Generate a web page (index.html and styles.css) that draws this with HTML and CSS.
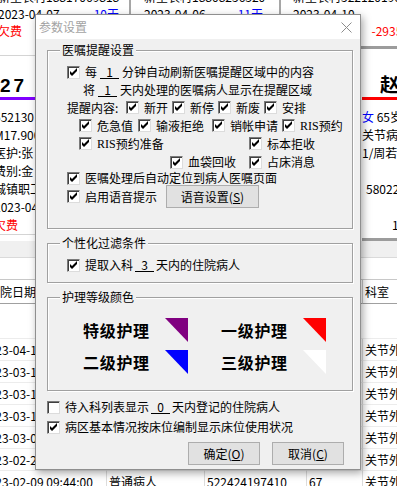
FILE: index.html
```html
<!DOCTYPE html>
<html lang="zh-CN">
<head>
<meta charset="utf-8">
<title>参数设置</title>
<link rel="stylesheet" href="styles.css">
</head>
<body>
<div class="app">
  <div class="toprow">
    <div class="tcard tc-a">
      <div class="tl"><span>新星农村</span><span>18817069818</span></div>
      <div class="tl"><span>2023-04-07</span><span class="blue">10天</span></div>
      <div class="tl"><span class="red">欠费</span></div>
    </div>
    <div class="tcard tc-b">
      <div class="tl"><span>新星农村</span><span>18808256320</span></div>
      <div class="tl"><span>2023-04-06</span><span class="blue">11天</span></div>
      <div class="tl"><span class="red">欠费</span></div>
    </div>
    <div class="tcard tc-c">
      <div class="tl"><span>新星农村</span><span>522120196506</span></div>
      <div class="tl"><span>2023-04-10</span><span class="blue">7天</span></div>
      <div class="tl"><span class="red">欠费</span><span class="red">-2935.00</span></div>
    </div>
  </div>

  <div class="midrow">
    <div class="mcard mc-a">
      <div class="mname">27</div>
      <div class="mbar bar-purple"></div>
      <div class="mlines">
        <div>552130</div>
        <div>M17.900</div>
        <div>医护:张</div>
        <div>费别:金</div>
        <div>城镇职工</div>
        <div>2023-04</div>
        <div class="red">欠费</div>
      </div>
    </div>
    <div class="mcard mc-b">
      <div class="mname">28</div>
      <div class="mbar bar-red"></div>
      <div class="mlines">
        <div>男 58岁</div>
        <div>膝关节病</div>
        <div>医护:李</div>
        <div>费别:农</div>
        <div>新农合</div>
        <div>2023-04</div>
        <div class="red">欠费</div>
      </div>
    </div>
    <div class="mcard mc-c">
      <div class="mname cname">赵</div>
      <div class="mbar bar-red"></div>
      <div class="mlines">
        <div><span class="blue">女</span> 65岁</div>
        <div>关节病</div>
        <div>1/周若</div>
        <div>&nbsp;</div>
        <div class="ind4">58022</div>
        <div>&nbsp;</div>
        <div class="ind30">15</div>
      </div>
    </div>
  </div>

  <div class="tbar"></div>
  <div class="tgap"></div>
  <div class="table">
    <div class="th th-date">入院日期</div>
    <div class="th">病人类别</div>
    <div class="th">身份证号</div>
    <div class="th">年龄</div>
    <div class="th">科室</div>
    <div class="tblank"></div>

    <div class="td">2023-04-14 10:21:00</div><div class="td">普通病人</div><div class="td">522424196805</div><div class="td">54</div><div class="td">关节外科</div>
    <div class="td">2023-03-18 08:12:00</div><div class="td">普通病人</div><div class="td">522424197203</div><div class="td">51</div><div class="td">关节外科</div>
    <div class="td">2023-03-16 15:40:00</div><div class="td">普通病人</div><div class="td">522424195911</div><div class="td">63</div><div class="td">关节外科</div>
    <div class="td">2023-03-12 11:05:00</div><div class="td">普通病人</div><div class="td">522424196307</div><div class="td">59</div><div class="td">关节外科</div>
    <div class="td">2023-03-06 09:30:00</div><div class="td">普通病人</div><div class="td">522424198102</div><div class="td">42</div><div class="td">关节外科</div>
    <div class="td">2023-02-26 16:18:00</div><div class="td">普通病人</div><div class="td">522424195608</div><div class="td">66</div><div class="td">关节外科</div>
    <div class="td">2023-02-09 09:44:00</div><div class="td">普通病人</div><div class="td">522424197410</div><div class="td">67</div><div class="td">关节外科</div>
  </div>

  <div class="dialog">
    <div class="titlebar">
      <span class="title">参数设置</span>
      <svg class="close" width="11" height="11" viewBox="0 0 11 11"><path d="M0.5 0.5 L10.5 10.5 M10.5 0.5 L0.5 10.5" stroke="#8c8c8c" stroke-width="1" fill="none"/></svg>
    </div>
    <div class="dlg-body">
      <div class="group g1">
        <div class="gtitle">医嘱提醒设置</div>
        <div class="row r1"><span class="cb"><svg width="11" height="11" viewBox="0 0 11 11"><polygon points="2,4 4,6 9,1 9,4 4,9 2,7"/></svg></span><span>每</span><span class="num">1</span><span>分钟自动刷新医嘱提醒区域中的内容</span></div>
        <div class="row r2"><span>将</span><span class="num">1</span><span>天内处理的医嘱病人显示在提醒区域</span></div>
        <div class="row r3">
          <span class="lbl">提醒内容:</span>
          <span class="opt"><span class="cb"><svg width="11" height="11" viewBox="0 0 11 11"><polygon points="2,4 4,6 9,1 9,4 4,9 2,7"/></svg></span>新开</span>
          <span class="opt"><span class="cb"><svg width="11" height="11" viewBox="0 0 11 11"><polygon points="2,4 4,6 9,1 9,4 4,9 2,7"/></svg></span>新停</span>
          <span class="opt"><span class="cb"><svg width="11" height="11" viewBox="0 0 11 11"><polygon points="2,4 4,6 9,1 9,4 4,9 2,7"/></svg></span>新废</span>
          <span class="opt"><span class="cb"><svg width="11" height="11" viewBox="0 0 11 11"><polygon points="2,4 4,6 9,1 9,4 4,9 2,7"/></svg></span>安排</span>
        </div>
        <div class="row r4">
          <span class="opt o1"><span class="cb"><svg width="11" height="11" viewBox="0 0 11 11"><polygon points="2,4 4,6 9,1 9,4 4,9 2,7"/></svg></span>危急值</span>
          <span class="opt o2"><span class="cb"><svg width="11" height="11" viewBox="0 0 11 11"><polygon points="2,4 4,6 9,1 9,4 4,9 2,7"/></svg></span>输液拒绝</span>
          <span class="opt o3"><span class="cb"><svg width="11" height="11" viewBox="0 0 11 11"><polygon points="2,4 4,6 9,1 9,4 4,9 2,7"/></svg></span>销帐申请</span>
          <span class="opt"><span class="cb"><svg width="11" height="11" viewBox="0 0 11 11"><polygon points="2,4 4,6 9,1 9,4 4,9 2,7"/></svg></span><span class="lat">RIS</span>预约</span>
        </div>
        <div class="row r5">
          <span class="opt o1"><span class="cb"><svg width="11" height="11" viewBox="0 0 11 11"><polygon points="2,4 4,6 9,1 9,4 4,9 2,7"/></svg></span><span class="lat">RIS</span>预约准备</span>
          <span class="opt"><span class="cb"><svg width="11" height="11" viewBox="0 0 11 11"><polygon points="2,4 4,6 9,1 9,4 4,9 2,7"/></svg></span>标本拒收</span>
        </div>
        <div class="row r6">
          <span class="opt o1"><span class="cb"><svg width="11" height="11" viewBox="0 0 11 11"><polygon points="2,4 4,6 9,1 9,4 4,9 2,7"/></svg></span>血袋回收</span>
          <span class="opt"><span class="cb"><svg width="11" height="11" viewBox="0 0 11 11"><polygon points="2,4 4,6 9,1 9,4 4,9 2,7"/></svg></span>占床消息</span>
        </div>
        <div class="row r7"><span class="cb"><svg width="11" height="11" viewBox="0 0 11 11"><polygon points="2,4 4,6 9,1 9,4 4,9 2,7"/></svg></span><span>医嘱处理后自动定位到病人医嘱页面</span></div>
        <div class="row r8">
          <span class="opt o1"><span class="cb"><svg width="11" height="11" viewBox="0 0 11 11"><polygon points="2,4 4,6 9,1 9,4 4,9 2,7"/></svg></span>启用语音提示</span>
          <button class="btn btn-voice" type="button">语音设置(<u>S</u>)</button>
        </div>
      </div>

      <div class="group g2">
        <div class="gtitle">个性化过滤条件</div>
        <div class="row r1"><span class="cb"><svg width="11" height="11" viewBox="0 0 11 11"><polygon points="2,4 4,6 9,1 9,4 4,9 2,7"/></svg></span><span>提取入科</span><span class="num num2">3</span><span>天内的住院病人</span></div>
      </div>

      <div class="group g3">
        <div class="gtitle">护理等级颜色</div>
        <div class="nr nr1">
          <div class="nitem"><span class="nlabel">特级护理</span><span class="tri tri-purple"></span></div>
          <div class="nitem"><span class="nlabel">一级护理</span><span class="tri tri-red"></span></div>
        </div>
        <div class="nr nr2">
          <div class="nitem"><span class="nlabel">二级护理</span><span class="tri tri-blue"></span></div>
          <div class="nitem"><span class="nlabel">三级护理</span><span class="tri tri-white"></span></div>
        </div>
      </div>

      <div class="row br1"><span class="cb"></span><span>待入科列表显示</span><span class="num num2">0</span><span>天内登记的住院病人</span></div>
      <div class="row br2"><span class="cb"><svg width="11" height="11" viewBox="0 0 11 11"><polygon points="2,4 4,6 9,1 9,4 4,9 2,7"/></svg></span><span>病区基本情况按床位编制显示床位使用状况</span></div>

      <div class="btns">
        <button class="btn pbtn" type="button">确定(<u>O</u>)</button>
        <button class="btn pbtn" type="button">取消(<u>C</u>)</button>
      </div>
    </div>
  </div>
</div>
</body>
</html>
```

FILE: styles.css
```css
* { box-sizing: border-box; }
html, body { margin: 0; padding: 0; }
body {
  width: 397px;
  height: 486px;
  overflow: hidden;
  background: #fff;
  font-family: "Noto Sans CJK SC", sans-serif;
  font-size: 12px;
  color: #000;
}
.app { position: relative; width: 397px; height: 486px; overflow: hidden; background: #fff; }

.blue { color: #0000ff; }
.red { color: #ff0000; }

/* ---------- background: top card row ---------- */
.toprow { display: flex; margin-top: -12px; height: 68px; }
.tcard { flex: none; line-height: 17px; white-space: nowrap; overflow: hidden; }
.tl { display: flex; justify-content: space-between; height: 17px; }
.tc-a { width: 135px; height: 68px; margin-left: -4px; padding: 0 10px 0 2px; border-right: 2px solid #a6a6a6; border-bottom: 1px solid #d4d4d4; }
.tc-b { width: 141px; height: 68px; margin-left: 9px; padding: 0 16px 0 4px; border-right: 2px solid #a6a6a6; }
.tc-c { width: 150px; height: 61px; margin-left: 3px; padding: 0 15px 0 9px; border-bottom: 3px solid #9c9c9c; }

/* ---------- background: name card row ---------- */
.midrow { display: flex; height: 185px; }
.mcard { flex: none; padding-top: 18px; white-space: nowrap; overflow: hidden; }
.mname { height: 23px; line-height: 23px; font-size: 19px; font-weight: bold; letter-spacing: 3px; font-family: "Liberation Sans", "Noto Sans CJK SC", sans-serif; }
.mbar { height: 3px; }
.bar-purple { background: #8000ff; }
.bar-red { background: #ff0000; }
.mlines { padding-top: 8px; line-height: 18px; }
.mc-a { width: 135px; height: 179px; margin-left: -6px; padding-left: 6px; border-bottom: 1px solid #d4d4d4; }
.mc-a .mlines { margin-left: -6px; }
.mc-b { width: 210px; margin-left: 11px; }
.mc-c { width: 90px; height: 185px; margin-left: 12px; border-bottom: 3px solid #9c9c9c; }
.cname { padding-left: 18px; }
.ind4 { padding-left: 4px; }
.ind30 { padding-left: 30px; }

/* ---------- background: table ---------- */
.tbar { height: 17px; background: #f0f0f0; border-bottom: 1px solid #dadada; }
.tgap { height: 21px; }
.table { display: grid; grid-template-columns: 128px 98px 102px 56px 60px; margin-left: -21px; white-space: nowrap; }
.th { height: 25px; line-height: 23px; padding-left: 2px; border-top: 1px solid #c8c8c8; border-bottom: 1px solid #a0a0a0; border-right: 1px solid #c8c8c8; overflow: hidden; }
.th-date { padding-left: 9px; }
.tblank { grid-column: 1 / -1; height: 35px; border-bottom: 1px solid #ececec; }
.td { height: 22px; line-height: 21px; padding-left: 2px; border-bottom: 1px solid #ececec; border-right: 1px solid #dcdcdc; overflow: hidden; }
.td:nth-child(5n+2) { padding-left: 3px; }

/* ---------- dialog ---------- */
.dialog {
  position: absolute;
  left: 35px;
  top: 14px;
  width: 326px;
  height: 456px;
  border: 1px solid #8f8f8f;
  background: #f0f0f0;
  box-shadow: 2px 3px 8px rgba(0, 0, 0, 0.35);
  display: flex;
  flex-direction: column;
}
.titlebar {
  flex: none;
  height: 24px;
  background: #fff;
  display: flex;
  align-items: center;
  justify-content: space-between;
  padding: 0 8px 0 3px;
}
.title { color: #a3a3a3; line-height: 14px; }
.close { display: block; }

.dlg-body { flex: 1; padding: 11px 7px 4px 11px; line-height: 14px; }

.group {
  border: 1px solid #a0a0a0;
  box-shadow: inset 1px 1px 0 #fff, 1px 1px 0 #fff;
}
.gtitle {
  width: max-content;
  margin: -8px 0 0 12px;
  padding: 0 2px;
  height: 14px;
  line-height: 14px;
  background: #f0f0f0;
}
.g1 { padding-bottom: 20px; }
.g2 { margin-top: 14px; padding-bottom: 8px; }
.g3 { margin-top: 14px; padding-bottom: 16px; }

.row { display: flex; align-items: center; white-space: nowrap; line-height: 14px; }
.opt { display: flex; align-items: center; flex: none; }
.lat { font-family: "Liberation Serif", serif; font-size: 12px; }

.cb {
  flex: none;
  width: 13px;
  height: 13px;
  margin-right: 5px;
  background: #fff;
  border: 1px solid;
  border-color: #7a7a7a #dcdcdc #dcdcdc #7a7a7a;
  box-shadow: inset 1px 1px 0 #404040;
  display: flex;
  align-items: center;
  justify-content: center;
}
.cb svg { display: block; fill: #000; }

.num {
  display: inline-block;
  width: 19px;
  height: 14px;
  line-height: 13px;
  margin: 0 3px;
  text-align: center;
  border-bottom: 1px solid #000;
}
.num2 { margin: 0 2px; }

.r1 { margin-top: 6px; height: 18px; padding-left: 19px; }
.r2 { height: 17px; padding-left: 35px; }
.r3 { height: 19px; padding-left: 19px; column-gap: 4px; }
.r3 .lbl { width: 55px; }
.r4 { height: 17px; padding-left: 31px; }
.r4 .o1 { width: 59px; }
.r4 .o2 { width: 74px; }
.r4 .o3 { width: 70px; }
.r5 { height: 19px; padding-left: 31px; }
.r5 .o1 { width: 170px; }
.r6 { height: 18px; padding-left: 122px; }
.r6 .o1 { width: 79px; }
.r7 { height: 14px; padding-left: 19px; }
.r8 { height: 23px; padding-left: 19px; }
.r8 .o1 { width: 99px; }

.btn {
  flex: none;
  height: 23px;
  padding: 0;
  margin: 0;
  font: inherit;
  line-height: 14px;
  color: #000;
  background: #e1e1e1;
  border: 1px solid #adadad;
  display: flex;
  align-items: center;
  justify-content: center;
}
.btn-voice { width: 93px; }

/* nursing level colours */
.nr { display: flex; height: 24px; padding-left: 35px; }
.nr1 { margin-top: 14px; }
.nr2 { margin-top: 8px; }
.nitem { display: flex; align-items: center; width: 138px; flex: none; }
.nlabel { flex: none; width: 67px; margin-right: 15px; font-size: 16px; font-weight: bold; letter-spacing: 0.7px; line-height: 20px; white-space: nowrap; }
.tri { flex: none; width: 23px; height: 24px; clip-path: polygon(0 0, 100% 0, 100% 100%); }
.tri-purple { background: #800080; }
.tri-red { background: #ff0000; }
.tri-blue { background: #0000ff; }
.tri-white { background: #ffffff; }

.br1 { margin-top: 7px; height: 18px; }
.br2 { margin-top: 2px; height: 18px; }

.btns { margin-top: 6px; display: flex; justify-content: flex-end; column-gap: 12px; padding-right: 9px; }
.pbtn { width: 72px; }
```
